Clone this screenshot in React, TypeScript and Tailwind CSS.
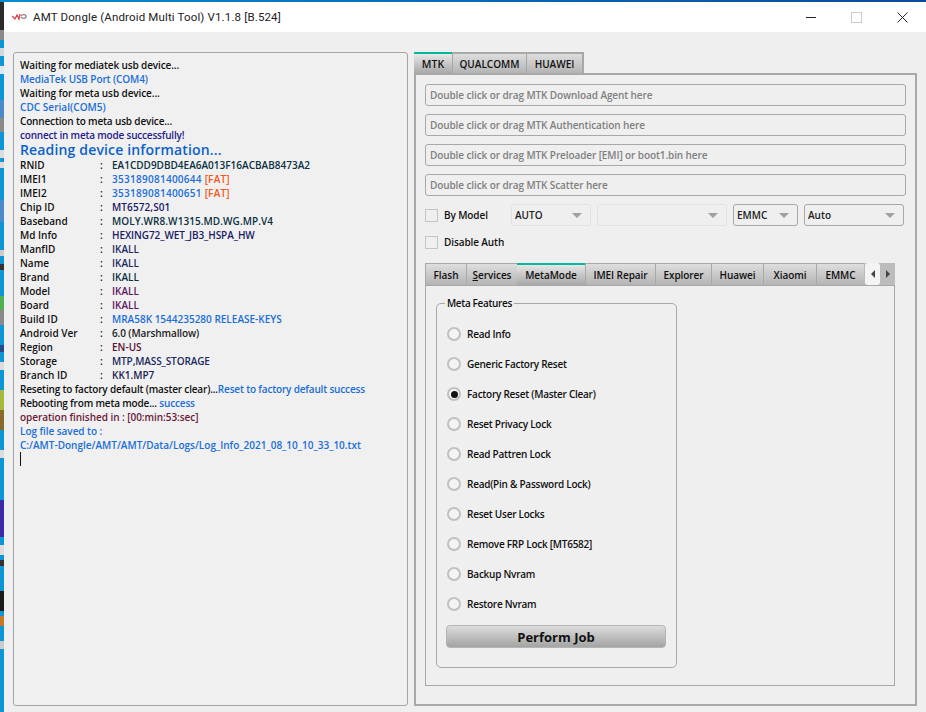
import React from "react";

type Seg = { t: string; c: string };
const head = (t: string, c: string, k: string) => ({ t, c, k });

const introA = [
  head("Waiting for mediatek usb device...", "text-[#111111]", "tracking-[-0.12px]"),
  head("MediaTek USB Port (COM4)", "text-[#1a6ed8]", "tracking-[-0.1px]"),
  head("Waiting for meta usb device...", "text-[#111111]", "tracking-[-0.1px]"),
  head("CDC Serial(COM5)", "text-[#1a6ed8]", "tracking-[0.05px]"),
  head("Connection to meta usb device...", "text-[#111111]", "tracking-[-0.16px]"),
  head("connect in meta mode successfully!", "text-[#27208c]", "tracking-[-0.2px]"),
];

const rows: { l: string; v: Seg[] }[] = [
  { l: "RNID", v: [{ t: "EA1CDD9DBD4EA6A013F16ACBAB8473A2", c: "text-[#0b3040]" }] },
  { l: "IMEI1", v: [{ t: "353189081400644", c: "text-[#1a6ed8] tracking-[0.27px]" }, { t: " [FAT]", c: "text-[#f4581e] tracking-[0.2px]" }] },
  { l: "IMEI2", v: [{ t: "353189081400651", c: "text-[#1a6ed8] tracking-[0.27px]" }, { t: " [FAT]", c: "text-[#f4581e] tracking-[0.2px]" }] },
  { l: "Chip ID", v: [{ t: "MT6572,S01", c: "text-[#1b1b66] tracking-[0.1px]" }] },
  { l: "Baseband", v: [{ t: "MOLY.WR8.W1315.MD.WG.MP.V4", c: "text-[#0b3040] tracking-[0.07px]" }] },
  { l: "Md Info", v: [{ t: "HEXING72_WET_JB3_HSPA_HW", c: "text-[#1b1b66] tracking-[-0.08px]" }] },
  { l: "ManfID", v: [{ t: "IKALL", c: "text-[#1b2a60]" }] },
  { l: "Name", v: [{ t: "IKALL", c: "text-[#1b2a60]" }] },
  { l: "Brand", v: [{ t: "IKALL", c: "text-[#0b3040]" }] },
  { l: "Model", v: [{ t: "IKALL", c: "text-[#5c1a60]" }] },
  { l: "Board", v: [{ t: "IKALL", c: "text-[#5c1a60]" }] },
  { l: "Build ID", v: [{ t: "MRA58K 1544235280 RELEASE-KEYS", c: "text-[#1a6ed8]" }] },
  { l: "Android Ver", v: [{ t: "6.0 (Marshmallow)", c: "text-[#222222] tracking-[-0.1px]" }] },
  { l: "Region", v: [{ t: "EN-US", c: "text-[#5c1038]" }] },
  { l: "Storage", v: [{ t: "MTP,MASS_STORAGE", c: "text-[#1b2a60] tracking-[-0.12px]" }] },
  { l: "Branch ID", v: [{ t: "KK1.MP7", c: "text-[#1b1b50]" }] },
];

const radios = [
  "Read Info",
  "Generic Factory Reset",
  "Factory Reset (Master Clear)",
  "Reset Privacy Lock",
  "Read Pattren Lock",
  "Read(Pin & Password Lock)",
  "Reset User Locks",
  "Remove FRP Lock [MT6582]",
  "Backup Nvram",
  "Restore Nvram",
];

const paths = [
  "Double click or drag MTK Download Agent here",
  "Double click or drag MTK Authentication here",
  "Double click or drag MTK Preloader [EMI] or boot1.bin here",
  "Double click or drag MTK Scatter here",
];

const innerTabs = [
  { t: "Flash", w: "w-[41px]" },
  { t: "Services", w: "w-[51px]" },
  { t: "MetaMode", w: "w-[68px]", active: true },
  { t: "IMEI Repair", w: "w-[70px]" },
  { t: "Explorer", w: "w-[56px]" },
  { t: "Huawei", w: "w-[52px]" },
  { t: "Xiaomi", w: "w-[53px]" },
  { t: "EMMC", w: "w-[48px]" },
];

const strip = [
  "h-[28px] bg-[#2b2b2b]",
  "h-[10px] bg-[#8a8a8a]",
  "h-[8px] bg-[#0b96d8]",
  "h-[8px] bg-[#cfd8e0]",
  "h-[10px] bg-[#0b96d8]",
  "h-[8px] bg-[#dfe8ee]",
  "h-[26px] bg-[#0b96d8]",
  "h-[18px] bg-[#4a8ac8]",
  "h-[14px] bg-[#8a8a8a]",
  "h-[18px] bg-[#0b96d8]",
  "h-[8px] bg-[#dddddd]",
  "h-[4px] bg-[#0b96d8]",
  "h-[6px] bg-[#dddddd]",
  "h-[32px] bg-[#0b96d8]",
  "h-[22px] bg-[#4a8ac8]",
  "h-[28px] bg-[#0b96d8]",
  "h-[6px] bg-[#cccccc]",
  "h-[8px] bg-[#0b96d8]",
  "h-[6px] bg-[#333333]",
  "h-[26px] bg-[#0b96d8]",
  "h-[14px] bg-[#4fb04f]",
  "h-[15px] bg-[#8a8a8a]",
  "h-[20px] bg-[#0b96d8]",
  "h-[7px] bg-[#2a4a8a]",
  "h-[10px] bg-[#0b96d8]",
  "h-[8px] bg-[#dddddd]",
  "h-[20px] bg-[#0b96d8]",
  "h-[20px] bg-[#a8b83a]",
  "h-[20px] bg-[#8a6a2a]",
  "h-[20px] bg-[#0b96d8]",
  "h-[8px] bg-[#dddddd]",
  "h-[42px] bg-[#0b96d8]",
  "h-[37px] bg-[#3a2aa8]",
  "h-[8px] bg-[#0b96d8]",
  "h-[10px] bg-[#dddddd]",
  "h-[5px] bg-[#0b96d8]",
  "h-[6px] bg-[#333333]",
  "h-[25px] bg-[#0b96d8]",
  "h-[20px] bg-[#1a1a1a]",
  "h-[5px] bg-[#0b96d8]",
  "h-[10px] bg-[#c87820]",
  "h-[15px] bg-[#0b96d8]",
  "h-[8px] bg-[#cccccc]",
  "h-[70px] bg-[#0b96d8]",
];

function Chevron({ tone }: { tone: string }) {
  return <span className={`w-0 h-0 border-l-[5px] border-r-[5px] border-t-[5px] border-l-transparent border-r-transparent ${tone}`} />;
}

function Select({ w, label, strong }: { w: string; label: string; strong?: boolean }) {
  return (
    <div
      className={`${w} shrink-0 h-[22px] flex items-center justify-between pl-[3px] pr-[8px] rounded-[3px] border ${
        strong ? "border-[#a8a8a8]" : "border-[#e2e2e2]"
      }`}
    >
      <span className="text-[#222222]">{label}</span>
      <Chevron tone="border-t-[#a0a0a0]" />
    </div>
  );
}

function Check({ label, w }: { label: string; w?: string }) {
  return (
    <div className={`shrink-0 flex items-center gap-[6px] ${w ?? ""}`}>
      <span className="w-[13px] h-[13px] border border-[#c4c4c4]" />
      <span className="text-[#111111] tracking-[-0.1px]">{label}</span>
    </div>
  );
}

export default function App() {
  return (
    <div className="w-[926px] h-[712px] overflow-hidden flex flex-col bg-[#efefef] font-['Open_Sans','Noto_Sans',sans-serif] font-semibold text-[10px] leading-[14px]">
      <div className="h-[2px] bg-gradient-to-r from-[#0a8ad0] to-[#0a4a9a] shrink-0" />
      <div className="flex flex-1 min-h-0">
        <div className="w-[4px] shrink-0 flex flex-col overflow-hidden">
          {strip.map((s, i) => (
            <div key={i} className={`${s} shrink-0`} />
          ))}
        </div>
        <div className="flex-1 min-w-0 flex flex-col">
          {/* title bar */}
          <div className="h-[30px] shrink-0 bg-white flex items-center pl-[8px] pr-[18px]">
            <svg width="15" height="8" viewBox="0 0 15 8" className="mr-[6px]">
              <path d="M0 3 L3 6 L5 2 L7 6 L8 1" fill="none" stroke="#d8484a" strokeWidth="1.3" />
              <path d="M9 3 C10 1 14 1 14 3.5 C14 6 10 6 9 4" fill="none" stroke="#9a7a80" strokeWidth="1.3" />
            </svg>
            <span className="font-['Roboto',sans-serif] font-normal text-[11.5px] tracking-[0.15px] text-[#222222] whitespace-nowrap">
              AMT Dongle (Android Multi Tool) V1.1.8 [B.524]
            </span>
            <div className="ml-auto flex items-center">
              <svg width="13" height="10" viewBox="0 0 13 10">
                <path d="M0 5.5 H10" stroke="#222222" strokeWidth="1" />
              </svg>
              <svg width="11" height="11" viewBox="0 0 11 11" className="ml-[32px]">
                <rect x="0.5" y="0.5" width="10" height="10" fill="none" stroke="#cccccc" />
              </svg>
              <svg width="11" height="11" viewBox="0 0 11 11" className="ml-[35px]">
                <path d="M0.5 0.5 L10.5 10.5 M10.5 0.5 L0.5 10.5" stroke="#222222" strokeWidth="1" />
              </svg>
            </div>
          </div>

          {/* body */}
          <div className="flex-1 min-h-0 flex pl-[9px] pt-[20px] pb-[6px] gap-[6px]">
            {/* log */}
            <div className="w-[395px] shrink-0 border border-[#a4a4a4] rounded-[3px] bg-[#f0f0f0] pl-[6px] pt-[5px] whitespace-nowrap">
              {introA.map((r) => (
                <div key={r.t} className={`h-[14px] ${r.c} ${r.k}`}>{r.t}</div>
              ))}
              <div className="h-[16px] leading-[16px] text-[14px] font-['Open_Sans',sans-serif] font-semibold tracking-[0.16px] text-[#0a62c8]">
                Reading device information...
              </div>
              {rows.map((r) => (
                <div key={r.l} className="h-[14px] flex">
                  <span className="w-[80px] text-[#111111]">{r.l}</span>
                  <span className="w-[12px] text-[#111111]">:</span>
                  <span>
                    {r.v.map((s) => (
                      <span key={s.t} className={s.c}>{s.t}</span>
                    ))}
                  </span>
                </div>
              ))}
              <div className="h-[14px] tracking-[-0.17px]">
                <span className="text-[#111111]">Reseting to factory default (master clear)...</span>
                <span className="text-[#1a6ed8]">Reset to factory default success</span>
              </div>
              <div className="h-[14px] tracking-[-0.17px]">
                <span className="text-[#111111]">Rebooting from meta mode... </span>
                <span className="text-[#1a6ed8]">success</span>
              </div>
              <div className="h-[14px] text-[#6a1a3a] tracking-[-0.05px]">operation finished in : [00:min:53:sec]</div>
              <div className="h-[14px] text-[#1a6ed8] tracking-[-0.05px]">Log file saved to :</div>
              <div className="h-[14px] text-[#1a6ed8]">C:/AMT-Dongle/AMT/AMT/Data/Logs/Log_Info_2021_08_10_10_33_10.txt</div>
              <div className="h-[14px] w-px bg-[#111111]" />
            </div>

            {/* right side */}
            <div className="w-[503px] shrink-0 flex flex-col">
              <div className="h-[21px] shrink-0 flex items-stretch text-[#111111]">
                <div className="w-[38px] flex items-center justify-center border-t-2 border-t-[#00b89c] bg-gradient-to-b from-[#e8e8e8] to-[#a9a9a9] text-[10.5px]">MTK</div>
                <div className="w-[75px] flex items-center justify-center border-t-2 border-x border-[#a8a8a8] bg-gradient-to-b from-[#dedede] to-[#b4b4b4]">QUALCOMM</div>
                <div className="w-[57px] flex items-center justify-center border-t-2 border-r-2 border-[#a8a8a8] bg-gradient-to-b from-[#dedede] to-[#b4b4b4]">HUAWEI</div>
              </div>
              <div className="flex-1 min-h-0 border-2 border-[#a8a8a8] pl-[9px] pr-[9px] pt-[9px] pb-[18px] flex flex-col">
                <div className="flex flex-col gap-[8px]">
                  {paths.map((p) => (
                    <div key={p} className="h-[22px] w-[481px] border border-[#a8a8a8] rounded-[3px] pl-[4px] flex items-center text-[#808080] tracking-[-0.1px]">
                      {p}
                    </div>
                  ))}
                </div>
                <div className="mt-[8px] h-[22px] flex items-center gap-[6px]">
                  <Check label="By Model" w="w-[80px]" />
                  <Select w="w-[80px]" label="AUTO" />
                  <Select w="w-[130px]" label="" />
                  <Select w="w-[65px]" label="EMMC" strong />
                  <Select w="w-[100px]" label="Auto" strong />
                </div>
                <div className="mt-[9px] h-[14px] flex items-center">
                  <Check label="Disable Auth" />
                </div>

                {/* inner tabs */}
                <div className="mt-[14px] w-[470px] flex-1 min-h-0 flex flex-col">
                  <div className="h-[22px] shrink-0 flex text-[#111111] tracking-[-0.05px]">
                    {innerTabs.map((t) =>
                      t.active ? (
                        <div key={t.t} className={`${t.w} shrink-0 flex items-center justify-center border-t-2 border-t-[#00b89c] bg-gradient-to-b from-[#e6e6e6] to-[#a9a9a9]`}>
                          {t.t}
                        </div>
                      ) : (
                        <div key={t.t} className={`${t.w} shrink-0 flex items-center justify-center border-t border-l border-[#a8a8a8] bg-gradient-to-b from-[#dedede] to-[#b4b4b4]`}>
                          {t.t === "Services" ? (
                            <span>
                              <span className="underline">S</span>ervices
                            </span>
                          ) : (
                            t.t
                          )}
                        </div>
                      )
                    )}
                    <div className="flex-1 flex items-stretch bg-[#bcbcbc]">
                      <div className="ml-auto w-[15px] bg-[#f4f4f4] rounded-[3px] flex items-center justify-center">
                        <span className="w-0 h-0 border-y-[4px] border-r-[4px] border-y-transparent border-r-[#444444]" />
                      </div>
                      <div className="w-[15px] flex items-center justify-center">
                        <span className="w-0 h-0 border-y-[4px] border-l-[4px] border-y-transparent border-l-[#444444]" />
                      </div>
                    </div>
                  </div>
                  <div className="flex-1 min-h-0 border border-[#a8a8a8] pl-[10px] pt-[17px]">
                    <div className="relative w-[241px] h-[365px] border border-[#a8a8a8] rounded-[5px] pl-[10px] pt-[15px]">
                      <span className="absolute left-[8px] top-[-8px] px-[2px] bg-[#efefef] text-[#111111] tracking-[-0.35px]">Meta Features</span>
                      <div className="flex flex-col">
                        {radios.map((r, i) => (
                          <div key={r} className="h-[30px] flex items-center gap-[6px] text-[#111111] tracking-[-0.25px]">
                            <span className="w-[14px] h-[14px] rounded-full border-2 border-[#c0c0c0] bg-[#f4f4f4] flex items-center justify-center">
                              {i === 2 && <span className="w-[7px] h-[7px] rounded-full bg-[#111111]" />}
                            </span>
                            <span>{r}</span>
                          </div>
                        ))}
                      </div>
                      <div className="mt-[6px] -ml-px w-[220px] h-[23px] rounded-[4px] border border-[#b4b4b4] bg-gradient-to-b from-[#dcdcdc] to-[#a4a4a4] flex items-center justify-center text-[13px] font-bold text-[#111111]">
                        Perform Job
                      </div>
                    </div>
                  </div>
                </div>
              </div>
            </div>
          </div>
        </div>
      </div>
    </div>
  );
}
